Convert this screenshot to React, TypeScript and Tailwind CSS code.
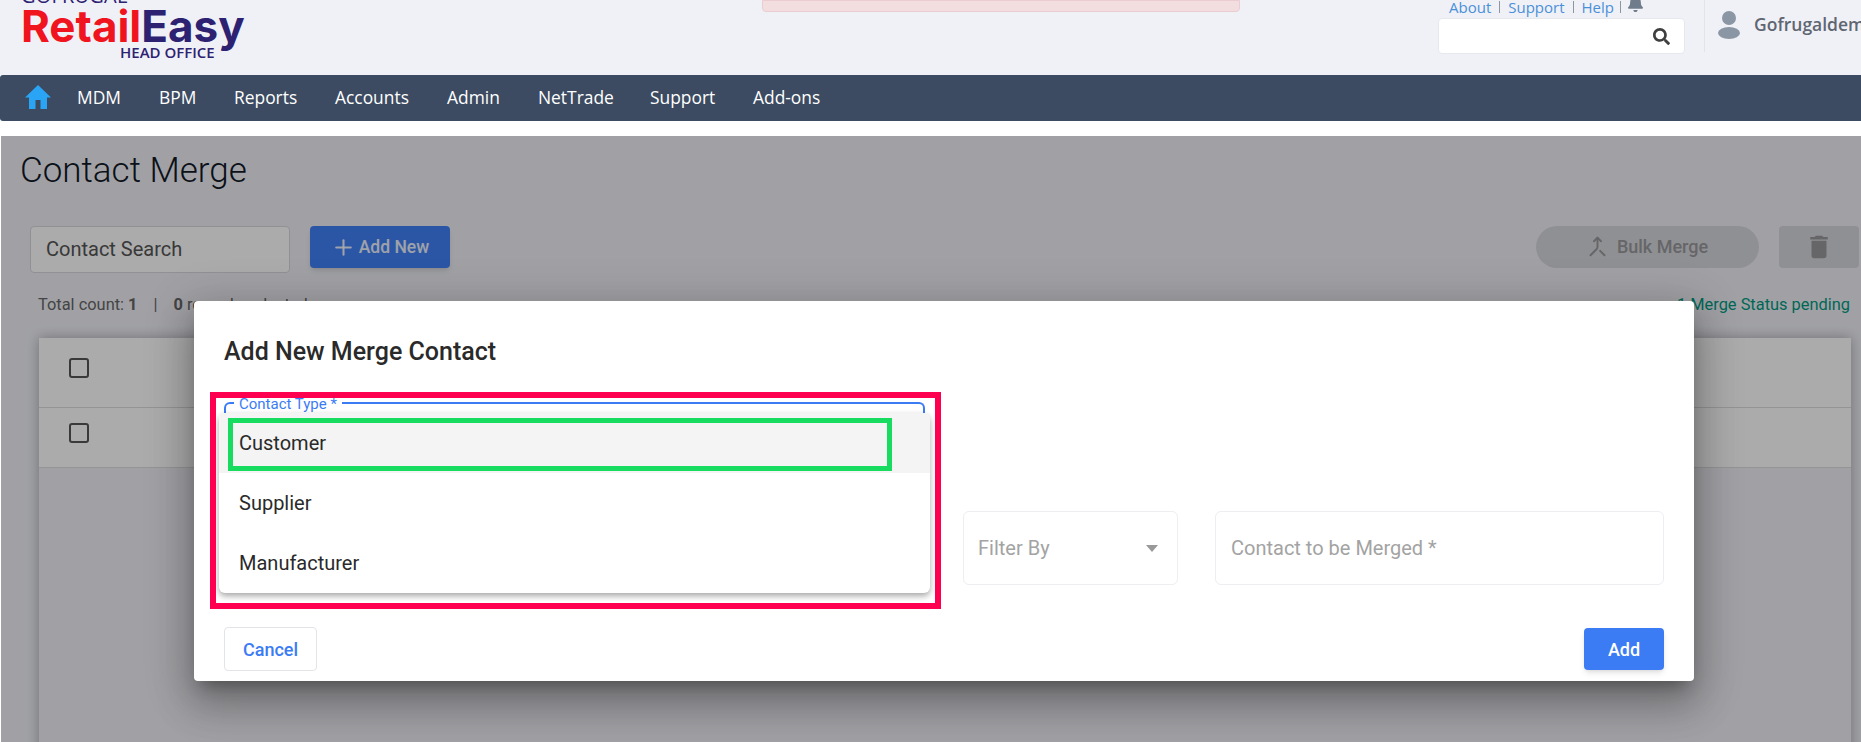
import { Merge, Plus } from "lucide-react";
import { FaBell, FaSearch } from "react-icons/fa";
import { MdDelete } from "react-icons/md";

const navItems = [
  { label: "MDM", w: "w-[82px]" },
  { label: "BPM", w: "w-[75px]" },
  { label: "Reports", w: "w-[101px]" },
  { label: "Accounts", w: "w-[112px]" },
  { label: "Admin", w: "w-[91px]" },
  { label: "NetTrade", w: "w-[112px]" },
  { label: "Support", w: "w-[103px]" },
  { label: "Add-ons", w: "w-[90px]" },
];

function HomeIcon() {
  return (
    <svg width="26" height="24" viewBox="0 0 26 24" className="fill-[#2aa5f5]">
      <path d="M13 0 L26 12.5 H22 V24 H15.5 V15 H10.5 V24 H4 V12.5 H0 Z" />
    </svg>
  );
}

function UserIcon() {
  return (
    <svg width="22" height="28" viewBox="0 0 22 28" className="fill-[#8b96a5]">
      <circle cx="11" cy="7" r="7" />
      <ellipse cx="11" cy="22" rx="11" ry="6" />
    </svg>
  );
}

function Header() {
  return (
    <header className="h-[75px] bg-[#f0f1f7] flex overflow-hidden relative">
      <div className="w-[762px] pl-[21px] shrink-0">
        <div className="text-[#2d2272] text-[20px] leading-none -mt-[14px] tracking-[0.2px] font-['Open_Sans']">
          GOFRUGAL
        </div>
        <div className="flex font-['Inter'] font-bold text-[44px] leading-[44px] -mt-[2px]">
          <span className="text-[#f0141e]">Retail</span>
          <span className="text-[#2d2272]">Easy</span>
        </div>
        <div className="text-[#2d2272] font-['Open_Sans'] font-semibold text-[15px] leading-none ml-[99px] -mt-[3px]">
          HEAD OFFICE
        </div>
      </div>
      <div className="w-[478px] h-[12px] bg-[#f2dede] border border-[#ebccd1] rounded-b-[4px] flex justify-center shrink-0 overflow-hidden">
        <span className="text-[#5b8fd0] text-[15px] leading-[15px] -mt-[18px] font-['Open_Sans'] whitespace-nowrap">Kindly renew the trial plan</span>
      </div>
      <div className="ml-[198px] w-[247px] shrink-0">
        <div className="h-[18px] flex items-center text-[15px] text-[#4a90d9] font-['Open_Sans'] pl-[11px] -mt-[2px] mb-[2px]">
          <span>About</span>
          <span className="w-px h-[12px] bg-[#8d97a3] mx-[8px]"></span>
          <span>Support</span>
          <span className="w-px h-[12px] bg-[#8d97a3] mx-[8px]"></span>
          <span>Help</span>
          <span className="w-px h-[12px] bg-[#8d97a3] mx-[6px]"></span>
          <FaBell size={17} className="text-[#6f7c8c] -mt-[8px]" />
        </div>
        <div className="h-[36px] bg-white border border-[#e6e8ef] rounded-[4px] flex items-center justify-end pr-[14px]">
          <FaSearch size={17} className="text-[#3f3f3f]" />
        </div>
      </div>
      <div className="ml-[19px] h-[55px] border-l border-[#e3e4ea] pl-[13px] flex items-center gap-[16px] shrink-0 -mt-[3px]">
        <UserIcon />
        <span className="text-[17.5px] font-semibold text-[#5f6672] font-['Open_Sans'] whitespace-nowrap -ml-[2px]">Gofrugaldemo</span>
      </div>
    </header>
  );
}

function Nav() {
  return (
    <nav className="h-[46px] bg-[#3c4b61] rounded-l-[3px] flex items-center pl-[25px] pb-[2px] text-white text-[17.4px] font-['Open_Sans']">
      <div className="w-[52px] -mt-[1px]">
        <HomeIcon />
      </div>
      {navItems.map((item) => (
        <span key={item.label} className={item.w}>
          {item.label}
        </span>
      ))}
    </nav>
  );
}

function Contents() {
  return (
    <div className="bg-[#f0f1f7] h-[606px] pl-[19px] pt-[15px] overflow-hidden">
      <h1 className="text-[35px] font-light leading-[40px] text-[#111827]">Contact Merge</h1>
      <div className="mt-[35px] ml-[10px] pr-[2px] flex items-start">
        <div className="w-[260px] h-[47px] bg-white border border-[#d8d9de] rounded-[4px] flex items-center pl-[15px] pb-[2px] text-[20px] text-[#555]">
          Contact Search
        </div>
        <button className="ml-[20px] w-[140px] h-[42px] bg-[#4080f8] rounded-[4px] text-white/90 text-[17.5px] font-medium flex items-center justify-center gap-[3px] shadow-md">
          <Plus size={25} strokeWidth={2} />
          Add New
        </button>
        <button className="ml-auto w-[223px] h-[42px] bg-[#d6d7db] rounded-full text-[#98999d] text-[18px] font-medium flex items-center justify-center gap-[9px] pb-[2px]">
          <Merge size={21} strokeWidth={2.2} />
          Bulk Merge
        </button>
        <button className="ml-[20px] w-[80px] h-[42px] bg-[#d6d7db] rounded-[4px] flex items-center justify-center">
          <MdDelete size={30} className="text-[#98999d]" />
        </button>
      </div>
      <div className="mt-[20px] ml-[18px] pr-[11px] h-[24px] flex items-center text-[16.4px] text-[#666]">
        <span>Total count: <b>1</b></span>
        <span className="mx-[16px]">|</span>
        <span><b>0</b> records selected</span>
        <span className="ml-auto text-[#009a82] text-[16.4px]">1 Merge Status pending</span>
      </div>
      <div className="mt-[21px] ml-[19px] mr-[10px] h-[500px] shadow-[0_0_12px_rgba(0,0,0,0.3)] bg-[#f0f1f7]">
        <div className="h-[70px] bg-white border-b border-[#ddd] pl-[30px] pt-[20px]">
          <div className="w-[20px] h-[20px] rounded-[3px] border-2 border-[#555]"></div>
        </div>
        <div className="h-[60px] bg-white border-b border-[#ddd] pl-[30px] pt-[15px]">
          <div className="w-[20px] h-[20px] rounded-[3px] border-2 border-[#555]"></div>
        </div>
      </div>
    </div>
  );
}

function MergeDialog() {
  return (
    <div className="absolute left-[193px] top-[165px] w-[1500px] h-[380px] bg-white rounded-[4px] shadow-[0_11px_15px_-7px_rgba(0,0,0,0.3),0_24px_38px_3px_rgba(0,0,0,0.2),0_9px_46px_8px_rgba(0,0,0,0.16)]">
      <div className="absolute left-[30px] top-[36px] text-[25px] font-medium leading-[30px] text-[#2a2a2a]">Add New Merge Contact</div>

      {/* filter + contact fields behind the open menu */}
      <div className="absolute left-[769px] top-[210px] w-[215px] h-[74px] border border-[#eceef2] rounded-[6px] flex items-center justify-between pl-[14px] pr-[19px] text-[20px] text-[#a3a3a3]">
        Filter By
        <span className="w-0 h-0 border-x-[6px] border-x-transparent border-t-[7px] border-t-[#999]"></span>
      </div>
      <div className="absolute left-[1021px] top-[210px] w-[449px] h-[74px] border border-[#eceef2] rounded-[6px] flex items-center pl-[15px] text-[20px] text-[#a3a3a3]">
        Contact to be Merged *
      </div>

      {/* Contact Type select outline + label */}
      <div className="absolute left-[30px] top-[101px] w-[701px] h-[20px] border-t-2 border-x-2 border-[#3b7cf5] rounded-t-[6px]"></div>
      <div className="absolute left-[40px] top-[93px] px-[5px] bg-white text-[15px] leading-[20px] text-[#3b7cf5]">Contact Type *</div>

      {/* open dropdown */}
      <div className="absolute left-[25px] top-[112px] w-[711px] h-[180px] bg-white rounded-[6px] shadow-[0_3px_6px_rgba(0,0,0,0.35)] overflow-hidden text-[20px] text-[#2a2a2a]">
        <div className="h-[60px] bg-[#f4f4f4] flex items-center pl-[20px]">Customer</div>
        <div className="h-[60px] flex items-center pl-[20px]">Supplier</div>
        <div className="h-[60px] flex items-center pl-[20px]">Manufacturer</div>
      </div>

      {/* annotation rectangles drawn on the screenshot */}
      <div className="absolute left-[16px] top-[91px] w-[731px] h-[217px] border-[6px] border-[#ff0050]"></div>
      <div className="absolute left-[34px] top-[117px] w-[664px] h-[53px] border-[5px] border-[#18dc60]"></div>

      <button className="absolute left-[30px] top-[326px] w-[93px] h-[44px] border border-[#e2e4e8] rounded-[4px] text-[18px] font-medium text-[#3b7cf5]">
        Cancel
      </button>
      <button className="absolute left-[1390px] top-[327px] w-[80px] h-[42px] bg-[#3b7cf5] rounded-[4px] text-[18px] font-medium text-white shadow-md">
        Add
      </button>
    </div>
  );
}

export default function App() {
  return (
    <div className="w-[1861px] h-[742px] overflow-hidden bg-white font-['Roboto',sans-serif]">
      <Header />
      <Nav />
      <div className="h-[15px] bg-white"></div>
      <main className="relative ml-[1px]">
        <Contents />
        <div className="absolute inset-0 bg-black/33"></div>
        <MergeDialog />
      </main>
    </div>
  );
}
